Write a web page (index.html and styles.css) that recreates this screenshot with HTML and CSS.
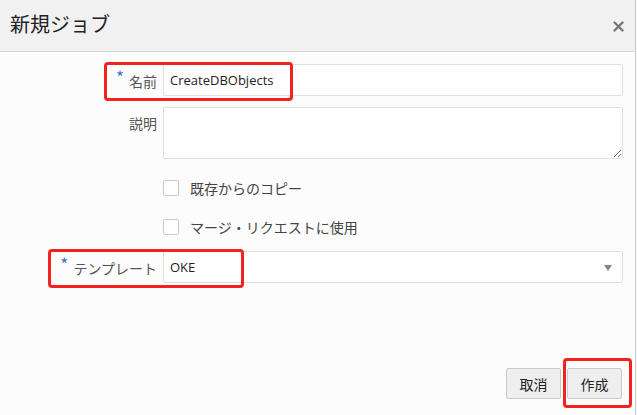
FILE: index.html
```html
<!DOCTYPE html>
<html lang="ja">
<head>
<meta charset="utf-8">
<title>新規ジョブ</title>
<link rel="stylesheet" href="styles.css">
</head>
<body>
<div class="dialog">
  <header class="head">
    <h1 class="title">新規ジョブ</h1>
    <button class="close" aria-label="閉じる">
      <svg width="11" height="11" viewBox="0 0 11 11"><path d="M1.5 1.5 L9.5 9.5 M9.5 1.5 L1.5 9.5" stroke="#777" stroke-width="2.4" stroke-linecap="round"/></svg>
    </button>
  </header>
  <div class="form">
    <div class="row row-name">
      <label class="lbl"><span class="req">*</span> 名前</label>
      <div class="input">CreateDBObjects</div>
    </div>
    <div class="row row-desc">
      <label class="lbl">説明</label>
      <textarea class="area"></textarea>
    </div>
    <div class="row row-check1">
      <span></span>
      <label class="check"><span class="box"></span>既存からのコピー</label>
    </div>
    <div class="row row-check2">
      <span></span>
      <label class="check"><span class="box"></span>マージ・リクエストに使用</label>
    </div>
    <div class="row row-tpl">
      <label class="lbl"><span class="req">*</span> テンプレート</label>
      <div class="input select">OKE<span class="arrow"></span></div>
    </div>
  </div>
  <footer class="foot">
    <button class="btn">取消</button>
    <button class="btn">作成</button>
  </footer>
  <div class="mark mark-name"></div>
  <div class="mark mark-tpl"></div>
  <div class="mark mark-create"></div>
</div>
</body>
</html>
```
FILE: styles.css
```css
html, body {
  margin: 0;
  padding: 0;
  background: #fcfcfc;
}
body {
  font-family: "Noto Sans CJK JP", "Open Sans", sans-serif;
  color: #333;
}
.dialog {
  position: relative;
  width: 635px;
  height: 415px;
  border-right: 1px solid #c8c8c8;
  display: flex;
  flex-direction: column;
  background: #fcfcfc;
}
.head {
  height: 52px;
  background: #f1f1f1;
  border-bottom: 1px solid #d4d4d4;
  display: flex;
  align-items: center;
  justify-content: space-between;
  padding: 0 11px 0 10px;
  box-sizing: border-box;
  flex: none;
}
.title {
  margin: 0;
  font-size: 20px;
  font-weight: 400;
  color: #222;
  line-height: 1;
  margin-top: -4px;
}
.close {
  border: 0;
  background: none;
  padding: 0;
  width: 11px;
  height: 11px;
  display: flex;
  margin-top: 1px;
}
.form {
  padding-top: 12px;
  display: flex;
  flex-direction: column;
}
.row {
  display: grid;
  grid-template-columns: 157px 460px;
  column-gap: 6px;
  align-items: center;
}
.lbl {
  text-align: right;
  font-size: 14px;
  color: #555;
  line-height: 20px;
}
.req {
  color: #3d7cc9;
  font-size: 17px;
  position: relative;
  top: -3px;
  margin-right: 2px;
}
.row-desc .lbl {
  align-self: start;
  padding-top: 6px;
}
.input {
  height: 32px;
  box-sizing: border-box;
  border: 1px solid #dfdfdf;
  background: #fff;
  font-family: "Open Sans", "Noto Sans CJK JP", sans-serif;
  font-size: 13px;
  color: #222;
  padding: 0 6px;
  display: flex;
  align-items: center;
  border-radius: 2px;
}
.area {
  height: 52px;
  box-sizing: border-box;
  border: 1px solid #dfdfdf;
  background: #fff;
  resize: both;
  margin: 0;
  border-radius: 2px;
  width: 460px;
}
.row-desc { margin-top: 11px; }
.row-check1 { margin-top: 21px; }
.row-check2 { margin-top: 23px; }
.row-tpl { margin-top: 16px; }
.check {
  display: flex;
  align-items: center;
  font-size: 14px;
  color: #444;
  line-height: 16px;
}
.box {
  width: 14px;
  height: 14px;
  border: 1px solid #c9c9c9;
  border-radius: 2px;
  background: #fff;
  margin-right: 11px;
  flex: none;
}
.select {
  position: relative;
}
.arrow {
  position: absolute;
  right: 10px;
  top: 13px;
  width: 0;
  height: 0;
  border-left: 4.5px solid transparent;
  border-right: 4.5px solid transparent;
  border-top: 6px solid #858585;
}
.foot {
  margin-top: auto;
  display: flex;
  justify-content: flex-end;
  gap: 6px;
  padding: 0 13px 16px 0;
}
.btn {
  height: 31px;
  width: 55px;
  border: 1px solid #c9c9c9;
  background: #eeeeee;
  border-radius: 2px;
  font-family: "Noto Sans CJK JP", sans-serif;
  font-size: 14px;
  color: #222;
  padding: 0;
}
.mark {
  position: absolute;
  border: 3px solid #f4221c;
  border-radius: 4px;
  box-sizing: border-box;
  pointer-events: none;
}
.mark-name { left: 104px; top: 62px; width: 189px; height: 39px; }
.mark-tpl { left: 48px; top: 249px; width: 196px; height: 39px; }
.mark-create { left: 563px; top: 358px; width: 69px; height: 50px; }
```
